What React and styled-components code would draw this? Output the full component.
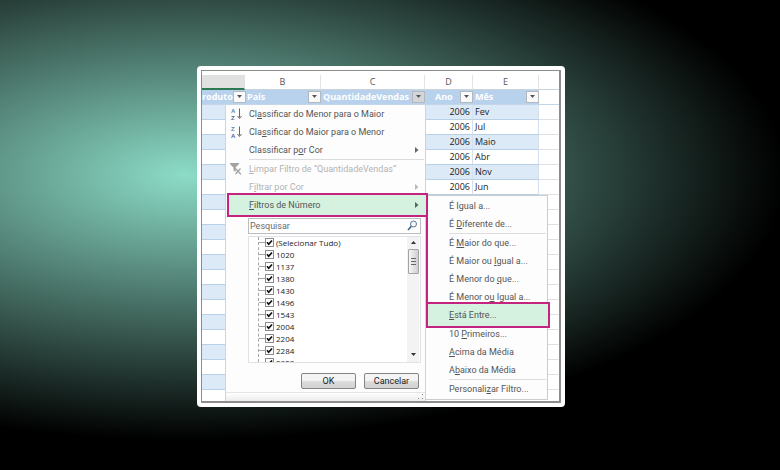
import React, { useState } from "react";
import styled, { createGlobalStyle, css } from "styled-components";

const GlobalStyle = createGlobalStyle`
  * {
    box-sizing: border-box;
  }

  body {
    margin: 0;
    background: #000;
    font-family: "Open Sans", "Noto Sans", sans-serif;
  }
`;

const PINK = "#c4237f";
const MENU_FONT = `Roboto, "Open Sans", sans-serif`;

const Page = styled.main`
  min-height: 100vh;
  display: flex;
  align-items: center;
  justify-content: center;
  padding: 18px 18px 16px 0;
  background: radial-gradient(
    ellipse 600px 265px at 185px 175px,
    #8cdcc7,
    #000
  );
`;

const Frame = styled.section`
  width: 100%;
  max-width: 368px;
  padding: 4px;
  border-radius: 4px;
  background: #fff;
`;

const Sheet = styled.div`
  position: relative;
  overflow: hidden;
  padding: 4px 0 11px;
  border: 1px solid #8d8d8d;
  border-width: 1px 2px 2px 1px;
  background: #fff;
`;

const Grid = styled.table`
  width: 100%;
  table-layout: fixed;
  border-collapse: separate;
  border-spacing: 0;
  font-size: 9px;
  line-height: 14px;
  color: #222;
`;

const Letter = styled.th`
  height: 15px;
  padding: 0;
  font-weight: 400;
  color: #555;
  border-right: 1px solid #e3e3e3;
  border-bottom: 1px solid #c9d3da;

  &:last-child {
    border-right: 0;
  }

  ${({ $selected }) =>
    $selected &&
    css`
      background: #e1e1e1;
      border-right-color: #e1e1e1;
      border-bottom: 2px solid #2c7a52;
    `}
`;

const Heading = styled.th`
  height: 15px;
  padding: 0;
  background: ${({ $blank }) => ($blank ? "#fff" : "#b8d2ee")};
  border-bottom: 1px solid #c3d5e8;
  color: #fff;
  text-align: left;
`;

const HeadingInner = styled.div`
  display: flex;
  align-items: center;
  justify-content: space-between;
  height: 14px;
  padding-left: ${({ $indent }) => $indent || 0}px;
  white-space: nowrap;
`;

const FilterButton = styled.button`
  flex: none;
  display: flex;
  align-items: center;
  justify-content: center;
  width: 13px;
  height: 12px;
  padding: 0;
  border: 1px solid #b4b8bd;
  background: ${({ $open }) => ($open ? "#d3d5d9" : "#fafafa")};
`;

const Cell = styled.td`
  height: 15px;
  padding: 0 2px;
  text-align: ${({ $right }) => ($right ? "right" : "left")};
  background: ${({ $band }) => ($band ? "#dce9f7" : "#fff")};
  border-bottom: 1px solid ${({ $plain }) => ($plain ? "#dde1e5" : "#b9cfe6")};
  border-right: 1px solid ${({ $plain }) => ($plain ? "transparent" : "#d3e0ee")};
`;

const Menu = styled.div`
  position: absolute;
  top: 34px;
  bottom: 0;
  left: 23px;
  z-index: 3;
  width: 201px;
  display: flex;
  flex-direction: column;
  background: #fdfdfd;
  border: 1px solid #d0d4d8;
  border-top: 0;
  border-bottom: 0;
`;

const SubMenu = styled.div`
  position: absolute;
  top: 124px;
  left: 223px;
  z-index: 2;
  width: 123px;
  padding: 1px 0;
  background: #fdfdfd;
  border: 1px solid #c9ccd0;
`;

const Item = styled.button`
  position: relative;
  display: flex;
  align-items: center;
  width: 100%;
  height: 18px;
  padding: 0 6px 0 0;
  border: 0;
  background: none;
  font: 9px/18px ${MENU_FONT};
  color: ${({ disabled }) => (disabled ? "#b3b3b3" : "#555")};
  text-align: left;
  white-space: nowrap;

  u {
    text-underline-offset: 1px;
  }
`;

const Callout = styled.span`
  position: absolute;
  inset: ${({ $inset }) => $inset};
  border: 2px solid ${PINK};
  background: #d5f1df;
`;

const Connector = styled.span`
  position: absolute;
  top: 144px;
  left: 224px;
  z-index: 4;
  width: 2px;
  height: 88px;
  background: ${PINK};
`;

const IconSlot = styled.span`
  position: relative;
  flex: none;
  display: flex;
  justify-content: center;
  width: 23px;
  padding-right: 4px;
`;

const ItemText = styled.span`
  position: relative;
  flex: 1;
`;

const Arrow = styled.svg`
  position: relative;
  width: 4px;
  height: 6px;
`;

const Separator = styled.hr`
  width: auto;
  height: 1px;
  margin: 0 1px 0 23px;
  border: 0;
  background: #dcdcdc;
`;

const SearchBox = styled.label`
  display: flex;
  align-items: center;
  height: 16px;
  margin: 4px 4px 0 22px;
  padding: 0 2px 0 1px;
  border: 1px solid #b9bdc2;
  background: #fff;
`;

const SearchInput = styled.input`
  flex: 1;
  min-width: 0;
  height: 14px;
  padding: 0;
  border: 0;
  outline: 0;
  background: none;
  font: 9px/14px ${MENU_FONT};

  &::placeholder {
    color: #6a6a6a;
    opacity: 1;
  }
`;

const ListBox = styled.div`
  display: flex;
  height: 127px;
  margin: 2px 4px 0 22px;
  overflow: hidden;
  border: 1px solid #e0e2e5;
  background: #fff;
`;

const Values = styled.div`
  flex: 1;
  margin-left: 9px;
  border-left: 1px dashed #a5a5a5;
`;

const ValueRow = styled.label`
  display: flex;
  align-items: center;
  height: 12px;
  font-size: 8px;
  line-height: 12px;
  color: #222;

  &::before {
    content: "";
    width: 6px;
    border-top: 1px dashed #a5a5a5;
  }
`;

const CheckWrap = styled.span`
  display: grid;
  width: 9px;
  height: 9px;
  margin-right: 2px;

  > * {
    grid-area: 1 / 1;
  }
`;

const Check = styled.input`
  appearance: none;
  width: 9px;
  height: 9px;
  margin: 0;
  border: 1px solid #8c8c8c;
  background: #fff;
`;

const ScrollBar = styled.div`
  display: flex;
  flex-direction: column;
  align-items: center;
  width: 12px;
  margin-right: 1px;
  padding: 4px 0 6px;
  background: #f3f3f3;
`;

const Thumb = styled.div`
  display: flex;
  align-items: center;
  justify-content: center;
  width: 11px;
  height: 25px;
  margin: 5px 0 auto;
  border: 1px solid #a3a3a3;
  border-radius: 1px;
  background: linear-gradient(90deg, #f6f6f6, #cfcfcf);
`;

const Buttons = styled.div`
  display: flex;
  justify-content: flex-end;
  gap: 8px;
  margin: 10px 6px 3px 0;
`;

const PushButton = styled.button`
  width: 55px;
  height: 16px;
  padding: 0;
  border: 1px solid #858585;
  border-radius: 2px;
  background: linear-gradient(#f4f4f4 45%, #dcdcdc 55%, #d2d2d2);
  font: 9px/14px ${MENU_FONT};
  color: #222;
`;

const Footer = styled.div`
  display: flex;
  flex: 1;
  align-items: flex-end;
  justify-content: flex-end;
  padding: 1px;
  border-top: 1px solid #e4e4e4;
  background: linear-gradient(#fff, #ececec);
`;

const columns = [
  { letter: "", title: "roduto", width: 43 },
  { letter: "B", title: "País", width: 76, indent: 2 },
  { letter: "C", title: "QuantidadeVendas", width: 104, indent: 2, open: true },
  { letter: "D", title: "Ano", width: 48, indent: 10 },
  { letter: "E", title: "Mês", width: 66, indent: 2 }
];

const months = ["Fev", "Jul", "Maio", "Abr", "Nov", "Jun"];
const rows = Array.from({ length: 19 }, (_, i) => months[i] || "");

const values = [
  "(Selecionar Tudo)",
  "1020",
  "1137",
  "1380",
  "1430",
  "1496",
  "1543",
  "2004",
  "2204",
  "2284",
  "2323"
];

// "&" goes before the access key, null is a separator
const comparisons = [
  "É I&gual a...",
  "É &Diferente de...",
  null,
  "É &Maior do que...",
  "É Maior ou &Igual a...",
  "É Menor do &que...",
  "É Menor o&u Igual a...",
  "&Está Entre...",
  "10 &Primeiros...",
  "&Acima da Média",
  "A&baixo da Média",
  null,
  "Personali&zar Filtro..."
];

const SubItem = styled(Item)`
  height: ${({ $active }) => ($active ? 19 : 18)}px;
`;

const AccessText = ({ text }) => {
  const at = text.indexOf("&");

  return (
    <ItemText>
      {text.slice(0, at)}
      <u>{text[at + 1]}</u>
      {text.slice(at + 2)}
    </ItemText>
  );
};

const SortIcon = ({ top, bottom }) => (
  <svg width="12" height="14" viewBox="0 0 12 14" aria-hidden="true">
    <g fontFamily="Liberation Sans, sans-serif" fontSize="6" fontWeight="700">
      <text x="1" y="6" fill="#5f7fae">
        {top}
      </text>
      <text x="1" y="13" fill="#5a5d92">
        {bottom}
      </text>
    </g>
    <path d="M9.5 1.5v9M7.5 9l2 2.5 2-2.5" fill="none" stroke="#666" />
  </svg>
);

const ClearIcon = () => (
  <svg width="12" height="12" viewBox="0 0 12 12" aria-hidden="true">
    <path d="M0 0h9v1L5.5 4.5V9L3.5 7.5v-3L0 1z" fill="#a2a2a2" />
    <path d="M5 5l6 6.5M10.5 5.5L5.5 11" stroke="#a2a2a2" strokeWidth="1.2" />
  </svg>
);

const SearchIcon = () => (
  <svg width="11" height="11" viewBox="0 0 11 11" aria-hidden="true">
    <circle cx="6.5" cy="4" r="3" fill="#f4f9fc" stroke="#60788c" />
    <path d="M4.3 6.3L1 10" stroke="#3f6480" strokeWidth="1.6" />
  </svg>
);

const Triangle = ({ up, color = "#555" }) => (
  <svg width="5" height="3" viewBox="0 0 5 3" aria-hidden="true">
    <path d={up ? "M0 3h5L2.5 0z" : "M0 0h5L2.5 3z"} fill={color} />
  </svg>
);

const SideArrow = ({ color }) => (
  <Arrow viewBox="0 0 4 6" aria-hidden="true">
    <path d="M0 0v6l3.5-3z" fill={color} />
  </Arrow>
);

const Spreadsheet = () => (
  <Grid>
    <colgroup>
      {columns.map(({ title, width }) => (
        <col key={title} width={width} />
      ))}
      <col />
    </colgroup>
    <thead>
      <tr>
        {columns.map(({ letter, title }) => (
          <Letter key={title} $selected={!letter}>
            {letter}
          </Letter>
        ))}
        <Letter />
      </tr>
      <tr>
        {columns.map(({ title, indent, open }) => (
          <Heading key={title}>
            <HeadingInner $indent={indent}>
              {title}
              <FilterButton $open={open} aria-label={`Filtro ${title}`}>
                <Triangle />
              </FilterButton>
            </HeadingInner>
          </Heading>
        ))}
        <Heading $blank />
      </tr>
    </thead>
    <tbody>
      {rows.map((month, i) => (
        <tr key={i}>
          <Cell $band={i % 2 === 0} />
          <Cell />
          <Cell />
          <Cell $right $band={month && i % 2 === 0}>
            {month && "2006"}
          </Cell>
          <Cell $band={month && i % 2 === 0}>{month}</Cell>
          <Cell $plain />
        </tr>
      ))}
    </tbody>
  </Grid>
);

const ValueList = () => {
  const [unchecked, setUnchecked] = useState({});

  return (
    <ListBox>
      <Values>
        {values.map(value => (
          <ValueRow key={value}>
            <CheckWrap>
              <Check
                type="checkbox"
                checked={!unchecked[value]}
                onChange={evt =>
                  setUnchecked({ ...unchecked, [value]: !evt.target.checked })
                }
              />
              {!unchecked[value] && (
                <svg width="9" height="9" viewBox="0 0 9 9" aria-hidden="true">
                  <path
                    d="M2 4.2l1.7 2L7 2.5"
                    fill="none"
                    stroke="#111"
                    strokeWidth="1.7"
                  />
                </svg>
              )}
            </CheckWrap>
            {value}
          </ValueRow>
        ))}
      </Values>
      <ScrollBar>
        <Triangle up color="#333" />
        <Thumb>
          <svg width="5" height="7" viewBox="0 0 5 7" aria-hidden="true">
            <path d="M0 .5h5M0 3.5h5M0 6.5h5" stroke="#666" />
          </svg>
        </Thumb>
        <Triangle color="#333" />
      </ScrollBar>
    </ListBox>
  );
};

const FilterMenu = () => {
  const [search, setSearch] = useState("");

  return (
    <Menu>
      <Item>
        <IconSlot>
          <SortIcon top="A" bottom="Z" />
        </IconSlot>
        <AccessText text="Cl&assificar do Menor para o Maior" />
      </Item>
      <Item>
        <IconSlot>
          <SortIcon top="Z" bottom="A" />
        </IconSlot>
        <AccessText text="Cla&ssificar do Maior para o Menor" />
      </Item>
      <Item>
        <IconSlot />
        <AccessText text="Classificar p&or Cor" />
        <SideArrow color="#666" />
      </Item>
      <Separator />
      <Item disabled>
        <IconSlot>
          <ClearIcon />
        </IconSlot>
        <AccessText text="&Limpar Filtro de “QuantidadeVendas”" />
      </Item>
      <Item disabled>
        <IconSlot />
        <AccessText text="F&iltrar por Cor" />
        <SideArrow color="#b9b9b9" />
      </Item>
      <Item>
        <Callout $inset="-3px -3px -3px 1px" />
        <IconSlot />
        <AccessText text="&Filtros de Número" />
        <SideArrow color="#4f6b5b" />
      </Item>
      <SearchBox>
        <SearchInput
          type="text"
          aria-label="Pesquisar"
          placeholder="Pesquisar"
          value={search}
          onChange={evt => setSearch(evt.target.value)}
        />
        <SearchIcon />
      </SearchBox>
      <ValueList />
      <Buttons>
        <PushButton>OK</PushButton>
        <PushButton>Cancelar</PushButton>
      </Buttons>
      <Footer>
        <svg width="6" height="6" viewBox="0 0 6 6" aria-hidden="true">
          <path d="M4 0h1v1H4zM4 4h1v1H4zM0 4h1v1H0z" fill="#888" />
        </svg>
      </Footer>
    </Menu>
  );
};

const NumberMenu = () => (
  <SubMenu>
    {comparisons.map((text, i) => {
      if (!text) {
        return <Separator key={i} />;
      }

      const active = text === "&Está Entre...";

      return (
        <SubItem key={i} $active={active}>
          {active && <Callout $inset="-4px -3px -3px 0" />}
          <IconSlot />
          <AccessText text={text} />
        </SubItem>
      );
    })}
  </SubMenu>
);

const App = () => (
  <>
    <GlobalStyle />
    <Page>
      <Frame>
        <Sheet>
          <Spreadsheet />
          <FilterMenu />
          <NumberMenu />
          <Connector />
        </Sheet>
      </Frame>
    </Page>
  </>
);

export default App;
